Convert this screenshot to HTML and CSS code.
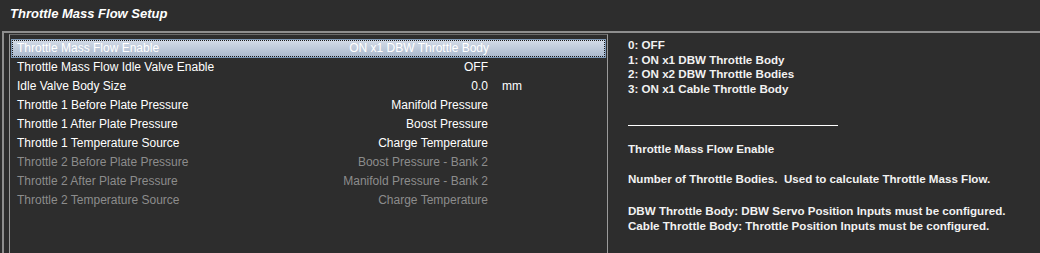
FILE: index.html
```html
<!DOCTYPE html>
<html lang="en">
<head>
    <meta charset="UTF-8">
    <title>Throttle Mass Flow Setup</title>
    <link rel="stylesheet" href="styles.css">
</head>
<body>
    <div class="title">Throttle Mass Flow Setup</div>
    <div class="panel">
        <div class="list">
            <div class="row selected">
                <span class="label">Throttle Mass Flow Enable</span>
                <span class="value">ON x1 DBW Throttle Body</span>
                <span class="unit"></span>
            </div>
            <div class="row">
                <span class="label">Throttle Mass Flow Idle Valve Enable</span>
                <span class="value">OFF</span>
                <span class="unit"></span>
            </div>
            <div class="row">
                <span class="label">Idle Valve Body Size</span>
                <span class="value">0.0</span>
                <span class="unit">mm</span>
            </div>
            <div class="row">
                <span class="label">Throttle 1 Before Plate Pressure</span>
                <span class="value">Manifold Pressure</span>
                <span class="unit"></span>
            </div>
            <div class="row">
                <span class="label">Throttle 1 After Plate Pressure</span>
                <span class="value">Boost Pressure</span>
                <span class="unit"></span>
            </div>
            <div class="row">
                <span class="label">Throttle 1 Temperature Source</span>
                <span class="value">Charge Temperature</span>
                <span class="unit"></span>
            </div>
            <div class="row disabled">
                <span class="label">Throttle 2 Before Plate Pressure</span>
                <span class="value">Boost Pressure - Bank 2</span>
                <span class="unit"></span>
            </div>
            <div class="row disabled">
                <span class="label">Throttle 2 After Plate Pressure</span>
                <span class="value">Manifold Pressure - Bank 2</span>
                <span class="unit"></span>
            </div>
            <div class="row disabled">
                <span class="label">Throttle 2 Temperature Source</span>
                <span class="value">Charge Temperature</span>
                <span class="unit"></span>
            </div>
        </div>
        <div class="help">
            <div class="options">
                <div>0: OFF</div>
                <div>1: ON x1 DBW Throttle Body</div>
                <div>2: ON x2 DBW Throttle Bodies</div>
                <div>3: ON x1 Cable Throttle Body</div>
            </div>
            <div class="rule"></div>
            <div class="help-title">Throttle Mass Flow Enable</div>
            <div class="help-text">Number of Throttle Bodies.&nbsp; Used to calculate Throttle Mass Flow.</div>
            <div class="help-notes">
                <div>DBW Throttle Body: DBW Servo Position Inputs must be configured.</div>
                <div>Cable Throttle Body: Throttle Position Inputs must be configured.</div>
            </div>
        </div>
    </div>
</body>
</html>
```

FILE: styles.css
```css
body {
    margin: 0;
    padding: 0;
    background-color: #2d2d2d;
    color: #ffffff;
    font-family: "Liberation Sans", Arial, sans-serif;
    height: 253px;
    overflow: hidden;
}
.title {
    height: 31px;
    box-sizing: border-box;
    padding: 6px 0 0 10px;
    font-size: 13px;
    font-weight: bold;
    font-style: italic;
}
.panel {
    display: flex;
    margin-left: 2px;
    height: 222px;
    box-sizing: border-box;
    border-top: 2px solid #8e8e8e;
    border-left: 2px solid #8e8e8e;
}
.list {
    width: 599px;
    margin: 1px 0 0 5px;
    padding: 4px 1px 0 1px;
    box-sizing: border-box;
    border-top: 1px solid #6a6a6a;
    border-left: 1px solid #9a9a9a;
    border-right: 1px solid #9a9a9a;
}
.row {
    display: grid;
    grid-template-columns: 286px 171px 60px;
    column-gap: 14px;
    height: 19px;
    line-height: 19px;
    padding-left: 6px;
    font-size: 12px;
    box-sizing: border-box;
}
.row .value {
    text-align: right;
}
.row.selected {
    background: linear-gradient(#d4dce8, #a9b8cc);
    outline: 1px dotted #1a1a1a;
    outline-offset: -2px;
    border: 1px solid #7f9ab8;
    line-height: 17px;
    padding-left: 5px;
}
.row.selected .value {
    margin-right: -1px;
}
.row.disabled {
    color: #8c8c8c;
}
.help {
    padding: 5px 0 0 20px;
    font-size: 11.6px;
    font-weight: bold;
    line-height: 14.7px;
    color: #f2f2f2;
}
.rule {
    width: 210px;
    height: 1px;
    background-color: #ffffff;
    margin: 28px 0 16px 0;
}
.help-title {
    margin-bottom: 15px;
}
.help-text {
    margin-bottom: 18px;
}
```
